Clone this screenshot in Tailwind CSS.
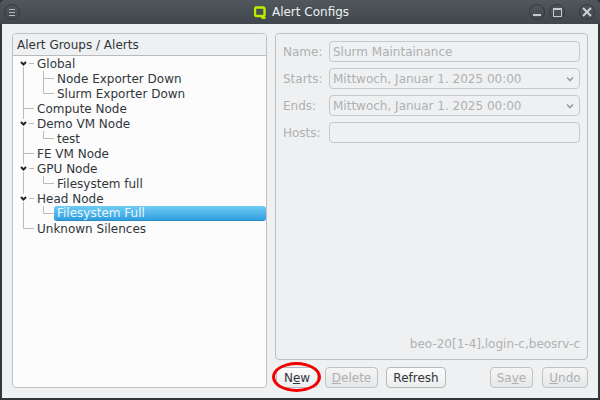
<!DOCTYPE html>
<html lang="en">
<head>
  <meta charset="UTF-8">
  <title>Alert Configs</title>
  <script src="https://cdn.jsdelivr.net/npm/@tailwindcss/browser@4"></script>
</head>
<body class="w-[600px] h-[400px] overflow-hidden bg-[#31363b] font-['DejaVu_Sans',sans-serif] text-[12px] text-[#31363b]">
  <div class="h-full flex flex-col px-[2px] pb-[2px]">

    <!-- title bar -->
    <div class="h-[24px] -mx-[2px] flex items-center bg-gradient-to-b from-[#50575d] to-[#3f464c] rounded-t-[5px] relative shrink-0">
      <div class="ml-[4px] w-[16px] h-[16px] rounded-full border border-[#333a40] flex items-center justify-center">
        <svg width="10" height="9" viewBox="0 0 10 9"><path d="M2 1.5H8M2 4.5H8M2 7.5H8" stroke="#b4b9bd" stroke-width="1.2"/></svg>
      </div>
      <div class="flex-1 flex justify-center items-center gap-[6px] pl-[54px]">
        <svg width="12" height="13" viewBox="0 0 12 13"><path d="M2 1.5H9.5L10.5 2.5V9L9.5 10H2L1 9V2.5Z M6.5 9.5L9 12H11.5" fill="none" stroke="#b8f000" stroke-width="2.4"/></svg>
        <span class="text-[#eff0f1]">Alert Configs</span>
      </div>
      <div class="flex items-center mr-[5px]">
        <div class="w-[16px] h-[16px] rounded-full border border-[#333a40] flex items-center justify-center">
          <div class="w-[8px] h-[2px] bg-[#c8cbcd] mt-[6px]"></div>
        </div>
        <div class="ml-[4px] w-[16px] h-[16px] rounded-full border border-[#333a40] flex items-center justify-center">
          <div class="w-[9px] h-[9px] border border-[#c8cbcd] border-t-2"></div>
        </div>
        <div class="ml-[14px] w-[16px] h-[16px] rounded-full border border-[#333a40] flex items-center justify-center">
          <svg width="10" height="10" viewBox="0 0 10 10"><path d="M1 1L9 9M9 1L1 9" stroke="#d0d3d5" stroke-width="2"/></svg>
        </div>
      </div>
    </div>

    <!-- content -->
    <div class="flex-1 bg-[#eff0f1] pl-[10px] pr-[10px] pt-[9px] pb-[10px] flex gap-[8px] min-h-0">

      <!-- tree -->
      <div class="w-[255px] flex flex-col border border-[#bfc1c3] rounded-[4px] bg-[#fcfcfc] overflow-hidden">
        <div class="h-[22px] shrink-0 bg-[#eff0f1] border-b border-[#b8babc] pl-[4px] pt-[1px] flex items-center">Alert Groups / Alerts</div>
        <div class="flex flex-col">
          <div class="h-[15px] flex items-center">
            <svg class="w-[21px] h-[15px] shrink-0" viewBox="0 0 21 15"><path d="M10.5 11V15M16 7.5H21" stroke="#bbb" fill="none"/><path d="M8 6L10.5 8.5L13 6" stroke="#232629" stroke-width="2" fill="none"/></svg>
            <span class="pl-[3px]">Global</span>
          </div>
          <div class="h-[15px] flex items-center">
            <svg class="w-[41px] h-[15px] shrink-0" viewBox="0 0 41 15"><path d="M10.5 0V15M30.5 0V15M31 7.5H41" stroke="#bbb" fill="none"/></svg>
            <span class="pl-[3px]">Node Exporter Down</span>
          </div>
          <div class="h-[15px] flex items-center">
            <svg class="w-[41px] h-[15px] shrink-0" viewBox="0 0 41 15"><path d="M10.5 0V15M30.5 0V7.5H41" stroke="#bbb" fill="none"/></svg>
            <span class="pl-[3px]">Slurm Exporter Down</span>
          </div>
          <div class="h-[15px] flex items-center">
            <svg class="w-[21px] h-[15px] shrink-0" viewBox="0 0 21 15"><path d="M10.5 0V15M11 7.5H21" stroke="#bbb" fill="none"/></svg>
            <span class="pl-[3px]">Compute Node</span>
          </div>
          <div class="h-[15px] flex items-center">
            <svg class="w-[21px] h-[15px] shrink-0" viewBox="0 0 21 15"><path d="M10.5 0V3M10.5 11V15M16 7.5H21" stroke="#bbb" fill="none"/><path d="M8 6L10.5 8.5L13 6" stroke="#232629" stroke-width="2" fill="none"/></svg>
            <span class="pl-[3px]">Demo VM Node</span>
          </div>
          <div class="h-[15px] flex items-center">
            <svg class="w-[41px] h-[15px] shrink-0" viewBox="0 0 41 15"><path d="M10.5 0V15M30.5 0V7.5H41" stroke="#bbb" fill="none"/></svg>
            <span class="pl-[3px]">test</span>
          </div>
          <div class="h-[15px] flex items-center">
            <svg class="w-[21px] h-[15px] shrink-0" viewBox="0 0 21 15"><path d="M10.5 0V15M11 7.5H21" stroke="#bbb" fill="none"/></svg>
            <span class="pl-[3px]">FE VM Node</span>
          </div>
          <div class="h-[15px] flex items-center">
            <svg class="w-[21px] h-[15px] shrink-0" viewBox="0 0 21 15"><path d="M10.5 0V3M10.5 11V15M16 7.5H21" stroke="#bbb" fill="none"/><path d="M8 6L10.5 8.5L13 6" stroke="#232629" stroke-width="2" fill="none"/></svg>
            <span class="pl-[3px]">GPU Node</span>
          </div>
          <div class="h-[15px] flex items-center">
            <svg class="w-[41px] h-[15px] shrink-0" viewBox="0 0 41 15"><path d="M10.5 0V15M30.5 0V7.5H41" stroke="#bbb" fill="none"/></svg>
            <span class="pl-[3px]">Filesystem full</span>
          </div>
          <div class="h-[15px] flex items-center">
            <svg class="w-[21px] h-[15px] shrink-0" viewBox="0 0 21 15"><path d="M10.5 0V3M10.5 11V15M16 7.5H21" stroke="#bbb" fill="none"/><path d="M8 6L10.5 8.5L13 6" stroke="#232629" stroke-width="2" fill="none"/></svg>
            <span class="pl-[3px]">Head Node</span>
          </div>
          <div class="h-[15px] flex items-center">
            <svg class="w-[41px] h-[15px] shrink-0" viewBox="0 0 41 15"><path d="M10.5 0V15M30.5 0V7.5H41" stroke="#bbb" fill="none"/></svg>
            <span class="flex-1 h-[15px] pl-[3px] flex items-center rounded-[3px] bg-gradient-to-b from-[#6fcdf5] to-[#2f9ede] border-b border-[#2a8ccb] text-[#eaf6fd]">Filesystem Full</span>
          </div>
          <div class="h-[15px] flex items-center">
            <svg class="w-[21px] h-[15px] shrink-0" viewBox="0 0 21 15"><path d="M10.5 0V7.5H21" stroke="#bbb" fill="none"/></svg>
            <span class="pl-[3px]">Unknown Silences</span>
          </div>
        </div>
      </div>

      <!-- details and buttons -->
      <div class="flex-1 flex flex-col min-w-0">
        <div class="flex-1 border border-[#bfc1c3] rounded-[4px] pl-[7px] pr-[7px] pt-[7px] pb-[6px] flex flex-col text-[#aeb0b2]">
          <div class="flex flex-col gap-[6px]">
            <div class="flex items-center">
              <span class="w-[46px] shrink-0">Name:</span>
              <div class="flex-1 h-[21px] border border-[#c6c8ca] rounded-[4px] px-[3px] flex items-center">Slurm Maintainance</div>
            </div>
            <div class="flex items-center">
              <span class="w-[46px] shrink-0">Starts:</span>
              <div class="flex-1 h-[21px] border border-[#c6c8ca] rounded-[4px] px-[3px] flex items-center justify-between">
                <span>Mittwoch, Januar 1. 2025 00:00</span>
                <svg class="mr-[2px]" width="8" height="6" viewBox="0 0 8 6"><path d="M1 1.5L4 4.5L7 1.5" stroke="#9a9c9e" stroke-width="1.6" fill="none"/></svg>
              </div>
            </div>
            <div class="flex items-center">
              <span class="w-[46px] shrink-0">Ends:</span>
              <div class="flex-1 h-[21px] border border-[#c6c8ca] rounded-[4px] px-[3px] flex items-center justify-between">
                <span>Mittwoch, Januar 1. 2025 00:00</span>
                <svg class="mr-[2px]" width="8" height="6" viewBox="0 0 8 6"><path d="M1 1.5L4 4.5L7 1.5" stroke="#9a9c9e" stroke-width="1.6" fill="none"/></svg>
              </div>
            </div>
            <div class="flex items-center">
              <span class="w-[46px] shrink-0">Hosts:</span>
              <div class="flex-1 h-[21px] border border-[#c6c8ca] rounded-[4px]"></div>
            </div>
          </div>
          <div class="mt-auto text-right">beo-20[1-4],login-c,beosrv-c</div>
        </div>

        <div class="h-[21px] mt-[7px] shrink-0 flex items-center">
          <div class="relative ml-[1px]">
            <button class="h-[21px] w-[42px] border border-[#b6b8ba] rounded-[4px] bg-gradient-to-b from-[#fcfcfc] to-[#eceded]">N<span class="underline">e</span>w</button>
            <div class="absolute -left-[4px] -top-[5px] w-[49px] h-[30px] rounded-[50%] border-[3px] border-[#f00000] blur-[0.5px]"></div>
          </div>
          <button class="ml-[7px] h-[21px] w-[53px] border border-[#c0c2c4] rounded-[4px] bg-gradient-to-b from-[#f5f5f5] to-[#e6e7e8] text-[#aeb0b2]"><span class="underline">D</span>elete</button>
          <button class="ml-[8px] h-[21px] w-[60px] border border-[#b6b8ba] rounded-[4px] bg-gradient-to-b from-[#fcfcfc] to-[#eceded]">Refresh</button>
          <button class="ml-auto h-[21px] w-[43px] border border-[#c0c2c4] rounded-[4px] bg-gradient-to-b from-[#f5f5f5] to-[#e6e7e8] text-[#aeb0b2]">Sa<span class="underline">v</span>e</button>
          <button class="ml-[9px] h-[21px] w-[46px] border border-[#c0c2c4] rounded-[4px] bg-gradient-to-b from-[#f5f5f5] to-[#e6e7e8] text-[#aeb0b2]"><span class="underline">U</span>ndo</button>
        </div>
      </div>
    </div>
  </div>
</body>
</html>
